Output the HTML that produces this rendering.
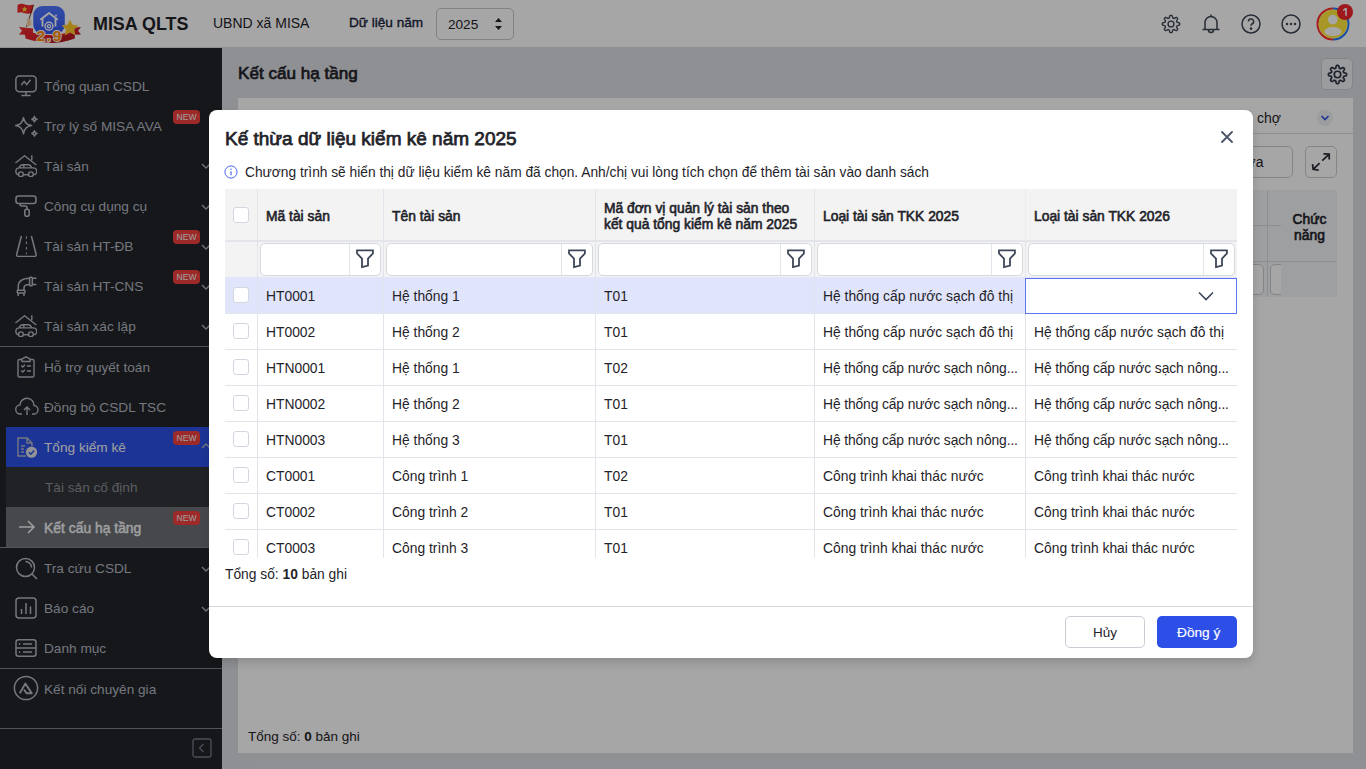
<!DOCTYPE html>
<html><head><meta charset="utf-8">
<style>
*{box-sizing:border-box;margin:0;padding:0}
html,body{width:1366px;height:769px;overflow:hidden;font-family:"Liberation Sans",sans-serif;color:#1f2329;background:#dcdee3}
.abs{position:absolute}
#hdr{position:absolute;left:0;top:0;width:1366px;height:47px;background:#fff}
#side{position:absolute;left:0;top:48px;width:222px;height:721px;background:#222428}
#main{position:absolute;left:222px;top:47px;width:1144px;height:722px;background:#dcdee3}
.si{position:absolute;left:0;width:222px;height:40px}
.si .t{position:absolute;left:44px;top:13px;font-size:13.65px;color:#b3b8c3;white-space:nowrap;line-height:16px}
.si svg{position:absolute;left:15px;top:9px}
.new{position:absolute;left:173px;top:4px;width:27px;height:14px;border-radius:4px;background:#f2403f;color:#f4f4f4;font-size:8.6px;line-height:14px;text-align:center}
.si .chev{position:absolute;left:201px;top:16px}
.sep{position:absolute;left:0;width:222px;height:1px;background:#7c818d}
#ovl{position:absolute;left:0;top:0;width:1366px;height:769px;background:rgba(0,0,0,0.35)}
#modal{position:absolute;left:209px;top:110px;width:1044px;height:548px;background:#fff;border-radius:8px;box-shadow:0 5px 10px rgba(0,0,0,0.14)}

.mt{position:absolute;white-space:nowrap;line-height:16px}
.hl{position:absolute;background:#e1e4ea}
.cb{position:absolute;width:16px;height:16px;border:1px solid #d2d7df;border-radius:3px;background:#fff}
.ht{position:absolute;font-size:13.85px;color:#1f2329;-webkit-text-stroke:0.6px #1f2329;line-height:16px;white-space:nowrap}
.dt{position:absolute;font-size:13.85px;color:#1f2329;line-height:16px;white-space:nowrap;overflow:hidden}
.fi{position:absolute;top:133px;height:33px;border:1px solid #d5d8de;border-radius:5px;background:#fff}
.fi .sp{position:absolute;right:30px;top:0;width:1px;height:31px;background:#e1e4ea}
.fi svg{position:absolute;right:6px;top:5px}
</style></head><body>
<div id="hdr">
  <!-- logo -->
  <svg class="abs" style="left:0;top:0" width="100" height="47" viewBox="0 0 100 47">
    <defs><linearGradient id="bg1" x1="0" y1="0" x2="0" y2="1"><stop offset="0" stop-color="#4f76ff"/><stop offset="1" stop-color="#3658f0"/></linearGradient></defs>
    <path d="M17.5 5 Q21 3 25 4.5 Q29 6 33.5 4.5 L32 13 Q28 14.5 24 13 Q20.5 11.5 17.5 13 Z" fill="#f02a2a"/>
    <path d="M24.5 6.3 l.9 1.9 2 .2 -1.5 1.3 .5 2 -1.9-1 -1.8 1 .5-2 -1.5-1.3 2-.2z" fill="#ffd83a"/>
    <line x1="33.5" y1="5" x2="26.5" y2="27" stroke="#5a2a1a" stroke-width="0.9"/>
    <rect x="33.3" y="6" width="31.5" height="28" rx="9" fill="url(#bg1)"/>
    <path d="M40.3 19.8 L49 13 L57.8 19.8" fill="none" stroke="#fff" stroke-width="1.8" stroke-linejoin="round"/>
    <path d="M56 16.5 V14.5" stroke="#fff" stroke-width="1.5"/>
    <path d="M42.5 18.5 V26.5 M55.5 18.5 V26.5" stroke="#fff" stroke-width="1.8"/>
    <circle cx="49" cy="26.2" r="4.6" fill="#fff"/>
    <circle cx="49" cy="26.2" r="3.2" fill="#3658f0"/>
    <circle cx="49" cy="26.2" r="2.2" fill="#fff"/>
    <circle cx="49" cy="26.2" r="0.9" fill="#3658f0"/>
    <path d="M27 19 Q29.5 18 31 20 L31.5 25 Q29 27 26.5 25.5 Z" fill="#f5cfa8"/>
    <path d="M19 27 L33 28.5 L33 35 L19 34.5 L22 30.8 Z" fill="#e8282c"/>
    <path d="M81 27 L66 28.5 L66 35 L81 34.5 L78 30.8 Z" fill="#c81c22"/>
    <path d="M24.5 30 Q49 40 75.5 30 L74.5 38.5 Q49 46.5 25.5 38.5 Z" fill="#e0222a"/>
    <path d="M50 37 Q62 37 74.5 33 L74.5 38.5 Q62 43 50 43 Z" fill="#b41a20"/>
    <path d="M70 19.8 l2.5 5 5.6.8 -4 3.8 1 5.5 -5.1-2.7 -5 2.7 1-5.5 -4-3.8 5.5-.8z" fill="#ffc928" stroke="#ffe07a" stroke-width="0.4"/>
    <text x="36.5" y="40.8" font-family="Liberation Sans" font-weight="700" font-size="15.5" letter-spacing="1.6" fill="#ff8c00" stroke="#fff" stroke-width="1.8" stroke-linejoin="round" paint-order="stroke">2.9</text>
  </svg>
  <div class="abs" style="left:93px;top:14px;font-size:17.9px;font-weight:700;color:#1f2329;white-space:nowrap;line-height:20px">MISA QLTS</div>
  <div class="abs" style="left:213px;top:15px;font-size:14px;color:#1f2329;white-space:nowrap;line-height:16px">UBND xã MISA</div>
  <div class="abs" style="left:349px;top:15px;font-size:13.6px;color:#1a2340;-webkit-text-stroke:0.35px #1a2340;white-space:nowrap;line-height:16px;">Dữ liệu năm</div>
  <div class="abs" style="left:436px;top:8px;width:78px;height:32px;border:1px solid #c4c7cc;border-radius:5px"></div>
  <div class="abs" style="left:448px;top:17px;font-size:13.6px;color:#1f2329;line-height:16px">2025</div>
  <svg class="abs" style="left:494px;top:17px" width="9" height="14" viewBox="0 0 9 14"><path d="M4.5 1 L8 5 H1Z M4.5 13 L8 9 H1Z" fill="#1f2329"/></svg>
  <!-- right icons -->
  <svg class="abs" style="left:1160px;top:13px" width="22" height="22" viewBox="0 0 24 24" fill="none" stroke="#3d4452" stroke-width="1.5" stroke-linejoin="round"><path d="M12.00 2.55 L12.37 2.56 L12.74 2.58 L13.09 2.77 L13.37 3.38 L13.58 4.06 L13.74 4.73 L13.88 5.35 L14.09 5.58 L14.34 5.67 L14.58 5.76 L14.83 5.87 L15.06 5.99 L15.38 5.97 L15.91 5.63 L16.50 5.27 L17.13 4.94 L17.75 4.70 L18.14 4.81 L18.41 5.06 L18.68 5.32 L18.94 5.59 L19.19 5.86 L19.30 6.25 L19.06 6.87 L18.73 7.50 L18.37 8.09 L18.03 8.62 L18.01 8.94 L18.13 9.17 L18.24 9.42 L18.33 9.66 L18.42 9.91 L18.65 10.12 L19.27 10.26 L19.94 10.42 L20.62 10.63 L21.23 10.91 L21.42 11.26 L21.44 11.63 L21.45 12.00 L21.44 12.37 L21.42 12.74 L21.23 13.09 L20.62 13.37 L19.94 13.58 L19.27 13.74 L18.65 13.88 L18.42 14.09 L18.33 14.34 L18.24 14.58 L18.13 14.83 L18.01 15.06 L18.03 15.38 L18.37 15.91 L18.73 16.50 L19.06 17.13 L19.30 17.75 L19.19 18.14 L18.94 18.41 L18.68 18.68 L18.41 18.94 L18.14 19.19 L17.75 19.30 L17.13 19.06 L16.50 18.73 L15.91 18.37 L15.38 18.03 L15.06 18.01 L14.83 18.13 L14.58 18.24 L14.34 18.33 L14.09 18.42 L13.88 18.65 L13.74 19.27 L13.58 19.94 L13.37 20.62 L13.09 21.23 L12.74 21.42 L12.37 21.44 L12.00 21.45 L11.63 21.44 L11.26 21.42 L10.91 21.23 L10.63 20.62 L10.42 19.94 L10.26 19.27 L10.12 18.65 L9.91 18.42 L9.66 18.33 L9.42 18.24 L9.17 18.13 L8.94 18.01 L8.62 18.03 L8.09 18.37 L7.50 18.73 L6.87 19.06 L6.25 19.30 L5.86 19.19 L5.59 18.94 L5.32 18.68 L5.06 18.41 L4.81 18.14 L4.70 17.75 L4.94 17.13 L5.27 16.50 L5.63 15.91 L5.97 15.38 L5.99 15.06 L5.87 14.83 L5.76 14.58 L5.67 14.34 L5.58 14.09 L5.35 13.88 L4.73 13.74 L4.06 13.58 L3.38 13.37 L2.77 13.09 L2.58 12.74 L2.56 12.37 L2.55 12.00 L2.56 11.63 L2.58 11.26 L2.77 10.91 L3.38 10.63 L4.06 10.42 L4.73 10.26 L5.35 10.12 L5.58 9.91 L5.67 9.66 L5.76 9.42 L5.87 9.17 L5.99 8.94 L5.97 8.62 L5.63 8.09 L5.27 7.50 L4.94 6.87 L4.70 6.25 L4.81 5.86 L5.06 5.59 L5.32 5.32 L5.59 5.06 L5.86 4.81 L6.25 4.70 L6.87 4.94 L7.50 5.27 L8.09 5.63 L8.62 5.97 L8.94 5.99 L9.17 5.87 L9.42 5.76 L9.66 5.67 L9.91 5.58 L10.12 5.35 L10.26 4.73 L10.42 4.06 L10.63 3.38 L10.91 2.77 L11.26 2.58 L11.63 2.56Z"/><circle cx="12" cy="12" r="3.2"/></svg>
  <svg class="abs" style="left:1201px;top:13px" width="20" height="22" viewBox="0 0 20 22" fill="none" stroke="#3d4452" stroke-width="1.5"><path d="M10 1.5 V3 M4 16 V9.5 a6 6 0 0 1 12 0 V16 M1.5 16.5 H18.5 M7.5 17 a2.5 2.5 0 0 0 5 0"/></svg>
  <svg class="abs" style="left:1241px;top:14px" width="20" height="20" viewBox="0 0 20 20" fill="none" stroke="#3d4452" stroke-width="1.5"><circle cx="10" cy="10" r="9"/><path d="M7.4 7.6 a2.6 2.6 0 1 1 3.6 2.4 c-.8.4-1 .9-1 1.8"/><circle cx="10" cy="14.6" r=".6" fill="#3d4452"/></svg>
  <svg class="abs" style="left:1281px;top:14px" width="20" height="20" viewBox="0 0 20 20" fill="none" stroke="#3d4452" stroke-width="1.5"><circle cx="10" cy="10" r="9"/><circle cx="6" cy="10" r=".5" fill="#3d4452"/><circle cx="10" cy="10" r=".5" fill="#3d4452"/><circle cx="14" cy="10" r=".5" fill="#3d4452"/></svg>
  <svg class="abs" style="left:1316px;top:7px" width="34" height="34" viewBox="0 0 34 34">
    <path d="M17 1.5 A15.5 15.5 0 0 0 17 32.5" fill="none" stroke="#ff2d2d" stroke-width="2"/>
    <path d="M17 1.5 A15.5 15.5 0 0 1 17 32.5" fill="none" stroke="#1e7bff" stroke-width="2"/>
    <circle cx="17" cy="17" r="14.3" fill="#ffe83c"/>
    <circle cx="16.8" cy="12.6" r="4.8" fill="#fff"/>
    <ellipse cx="17" cy="24.6" rx="8.6" ry="4.5" fill="#fff"/>
  </svg>
  <div class="abs" style="left:1337px;top:4px;width:16px;height:16px;border-radius:50%;background:#f2272e"><svg class="abs" style="left:5px;top:4px" width="6" height="8" viewBox="0 0 6 8" fill="#fff"><path d="M3.2 0 H4.8 V7.8 H3.2 V2.1 L1.1 3.1 V1.5 Z"/></svg></div>
</div>

<div id="side">
  <div class="si" style="top:18px"><svg width="22" height="22" viewBox="0 0 22 22" fill="none" stroke="#b3b8c3" stroke-width="1.5"><rect x="0.9" y="0.9" width="20.2" height="15.8" rx="3.5"/><path d="M11 16.7 V20.3 M6.3 20.5 H15.7 M6.2 10 L9.2 6.6 L11.8 9.6 L15.5 4.8"/></svg><div class="t">Tổng quan CSDL</div></div>
  <div class="si" style="top:58px"><svg width="24" height="24" viewBox="0 0 24 24" fill="none" stroke="#b3b8c3" stroke-width="1.5" stroke-linejoin="round"><path d="M8.5 2.6 Q9.6 9.6 16.6 10.6 Q9.6 11.6 8.5 18.8 Q7.4 11.6 0.6 10.6 Q7.4 9.6 8.5 2.6Z"/><path d="M19.4 1.5 Q19.8 3.8 22 4.2 Q19.8 4.6 19.4 6.9 Q19 4.6 16.8 4.2 Q19 3.8 19.4 1.5Z M19.4 15.7 Q19.8 18 22 18.4 Q19.8 18.8 19.4 21.1 Q19 18.8 16.8 18.4 Q19 18 19.4 15.7Z"/></svg><div class="t">Trợ lý số MISA AVA</div><div class="new">NEW</div></div>
  <div class="si" style="top:98px"><svg width="22" height="22" viewBox="0 0 22 22" fill="none" stroke="#b3b8c3" stroke-width="1.4"><path d="M0.4 8 L9.6 0.8 L21.4 10" stroke-linejoin="round"/><path d="M16.8 0.2 V5.2"/><path d="M4 12.8 Q5.2 9.7 7.8 9.7 H13.6 Q15.4 9.7 16.6 12.8 M8.8 9.9 V12.8"/><rect x="0.9" y="12.9" width="20.8" height="6.9" rx="3.4"/><circle cx="5.9" cy="19.3" r="2.4" fill="#222428"/><circle cx="15.9" cy="19.3" r="2.4" fill="#222428"/></svg><div class="t">Tài sản</div><svg class="chev" style="left:201px;top:15px" width="10" height="10" viewBox="0 0 10 10" fill="none" stroke="#b3b8c3" stroke-width="1.3"><path d="M1 3 L5 7 L9 3"/></svg></div>
  <div class="si" style="top:138px"><svg width="24" height="24" viewBox="0 0 24 24" fill="none" stroke="#b3b8c3" stroke-width="1.6"><rect x="1" y="1" width="20" height="7.5" rx="2.5"/><path d="M5 8.5 V9 Q5 11 7 11 H10 Q12 11 12 13 V14"/><rect x="9.8" y="14.2" width="4.4" height="7" rx="2"/></svg><div class="t">Công cụ dụng cụ</div><svg class="chev" width="10" height="10" viewBox="0 0 10 10" fill="none" stroke="#b3b8c3" stroke-width="1.3"><path d="M1 3 L5 7 L9 3"/></svg></div>
  <div class="si" style="top:178px"><svg width="22" height="22" viewBox="0 0 22 22" fill="none" stroke="#b3b8c3" stroke-width="1.5"><path d="M6.4 1 L1.7 19.3 Q1.3 21.4 3.4 21.4 H19.4 Q21.5 21.4 21.1 19.3 L16.4 1" stroke-linejoin="round"/><path d="M11.4 1.2 V3.8 M11.4 6.6 V9.2 M11.4 12 V14.6 M11.4 17.4 V19.2" stroke-width="1.1"/></svg><div class="t">Tài sản HT-ĐB</div><div class="new">NEW</div><svg class="chev" width="10" height="10" viewBox="0 0 10 10" fill="none" stroke="#b3b8c3" stroke-width="1.3"><path d="M1 3 L5 7 L9 3"/></svg></div>
  <div class="si" style="top:218px"><svg width="22" height="22" viewBox="0 0 22 22" fill="none" stroke="#b3b8c3" stroke-width="1.5"><path d="M3.2 15.2 V12 Q3.2 3.4 14.6 3.3 M9 15.2 V12.8 Q9 9.6 14.6 9.6 M17.3 3.3 H21.4 M17.3 9.6 H21.4 M3.2 17.9 V21 M9 17.9 V21"/><rect x="14.6" y="2.2" width="2.7" height="8.6" rx="0.8"/><rect x="2.2" y="15.2" width="7.8" height="2.7" rx="0.8"/></svg><div class="t">Tài sản HT-CNS</div><div class="new">NEW</div><svg class="chev" width="10" height="10" viewBox="0 0 10 10" fill="none" stroke="#b3b8c3" stroke-width="1.3"><path d="M1 3 L5 7 L9 3"/></svg></div>
  <div class="si" style="top:258px"><svg width="22" height="22" viewBox="0 0 22 22" fill="none" stroke="#b3b8c3" stroke-width="1.4"><path d="M0.4 8 L9.6 0.8 L21.4 10" stroke-linejoin="round"/><path d="M16.8 0.2 V5.2"/><path d="M4 12.8 Q5.2 9.7 7.8 9.7 H13.6 Q15.4 9.7 16.6 12.8 M8.8 9.9 V12.8"/><rect x="0.9" y="12.9" width="20.8" height="6.9" rx="3.4"/><circle cx="5.9" cy="19.3" r="2.4" fill="#222428"/><circle cx="15.9" cy="19.3" r="2.4" fill="#222428"/></svg><div class="t">Tài sản xác lập</div><svg class="chev" width="10" height="10" viewBox="0 0 10 10" fill="none" stroke="#b3b8c3" stroke-width="1.3"><path d="M1 3 L5 7 L9 3"/></svg></div>
  <div class="sep" style="top:298px"></div>
  <div class="si" style="top:299px"><svg width="22" height="22" viewBox="0 0 22 22" fill="none" stroke="#b3b8c3" stroke-width="1.4"><path d="M7 3.5 H4.5 Q3 3.5 3 5 V19.5 Q3 21 4.5 21 H17.5 Q19 21 19 19.5 V5 Q19 3.5 17.5 3.5 H15 M7 5.5 V3 L11 0.8 L15 3 V5.5 Z"/><path d="M6.3 9.5 L7.8 11 L10 8.8 M12 10 H16 M6.3 14.5 L7.8 16 L10 13.8 M12 15 H16"/></svg><div class="t">Hỗ trợ quyết toán</div></div>
  <div class="si" style="top:339px"><svg width="24" height="22" viewBox="0 0 24 22" fill="none" stroke="#b3b8c3" stroke-width="1.4"><path d="M7 18 H5.5 A4.5 4.5 0 0 1 5 9 A7 7 0 0 1 19 9.5 A4.2 4.2 0 0 1 18.5 18 H17 M12 19 V11 M9 14 L12 11 L15 14"/></svg><div class="t">Đồng bộ CSDL TSC</div></div>
  <div class="si" style="top:379px;left:6px;width:216px;background:#2b50e6"><svg style="left:9px" width="22" height="22" viewBox="0 0 22 22" fill="none" stroke="#b3b8c3" stroke-width="1.4"><path d="M11 20 H3 V2 H12 L17 7 V10 M12 2 V7 H17 M6 10 H10 M6 13 H9 M6 16 H9"/><circle cx="16.5" cy="16.2" r="5.6" fill="#dfe1e6" stroke="none"/><path d="M13.8 16.3 L15.8 18.2 L19.2 14.6" stroke="#2b50e6" stroke-width="1.4"/></svg><div class="t" style="left:38px;color:#f4f5f7">Tổng kiểm kê</div><div class="new" style="left:167px">NEW</div><svg class="chev" style="left:195px;top:14px" width="10" height="10" viewBox="0 0 10 10" fill="none" stroke="#b3b8c3" stroke-width="1.3"><path d="M1 7 L5 3 L9 7"/></svg></div>
  <div class="si" style="top:419px;left:6px;width:216px;background:#33353a"><div class="t" style="left:39px;color:#8d9097">Tài sản cố định</div></div>
  <div class="si" style="top:459px;left:6px;width:216px;background:#6d6f75"><svg style="left:12px;top:12px" width="18" height="16" viewBox="0 0 18 16" fill="none" stroke="#f4f5f7" stroke-width="1.5"><path d="M1 8 H16 M10 2 L16 8 L10 14"/></svg><div class="t" style="left:38px;font-size:13.9px;color:#f4f5f7;-webkit-text-stroke:0.45px #f4f5f7">Kết cấu hạ tầng</div><div class="new" style="left:167px">NEW</div></div>
  <div class="sep" style="top:499px"></div>
  <div class="si" style="top:500px"><svg width="24" height="24" viewBox="0 0 24 24" fill="none" stroke="#b3b8c3" stroke-width="1.5"><circle cx="10.5" cy="10.5" r="9"/><path d="M17 17 L22 22 M10.5 4.5 A6 6 0 0 1 16.5 10.5"/></svg><div class="t">Tra cứu CSDL</div><svg class="chev" width="10" height="10" viewBox="0 0 10 10" fill="none" stroke="#b3b8c3" stroke-width="1.3"><path d="M1 3 L5 7 L9 3"/></svg></div>
  <div class="si" style="top:540px"><svg width="22" height="22" viewBox="0 0 22 22" fill="none" stroke="#b3b8c3" stroke-width="1.5"><rect x="1" y="1" width="20" height="20" rx="3"/><path d="M6.5 17 V12 M11 17 V6 M15.5 17 V9.5"/></svg><div class="t">Báo cáo</div><svg class="chev" width="10" height="10" viewBox="0 0 10 10" fill="none" stroke="#b3b8c3" stroke-width="1.3"><path d="M1 3 L5 7 L9 3"/></svg></div>
  <div class="si" style="top:580px"><svg width="22" height="22" viewBox="0 0 22 22" fill="none" stroke="#b3b8c3" stroke-width="1.5"><rect x="1" y="2.7" width="20" height="16.6" rx="2.5"/><path d="M1 11 H21 M8 6.9 H17 M8 15.1 H17"/><circle cx="4.6" cy="6.9" r=".9" fill="#b3b8c3" stroke="none"/><circle cx="4.6" cy="15.1" r=".9" fill="#b3b8c3" stroke="none"/></svg><div class="t">Danh mục</div></div>
  <div class="sep" style="top:620px"></div>
  <div class="si" style="top:621px"><svg style="left:13px;top:6px" width="26" height="26" viewBox="0 0 26 26" fill="none" stroke="#b3b8c3" stroke-width="1.5"><circle cx="13" cy="13" r="11.6"/><path d="M6.8 18.2 L12.3 8.6 L18.8 18.2 H13.6 L11 14.6" stroke-width="1.9" stroke-linejoin="round"/></svg><div class="t">Kết nối chuyên gia</div></div>
  <div class="sep" style="top:680px"></div>
  <svg class="abs" style="left:192px;top:690px" width="20" height="20" viewBox="0 0 20 20" fill="none" stroke="#737a8a" stroke-width="1.3"><rect x="1" y="1" width="18" height="18" rx="2"/><path d="M11.5 6 L7.5 10 L11.5 14"/></svg>
</div>
<div id="main">
  <div class="abs" style="left:16px;top:18px;font-size:17.1px;color:#1f2329;-webkit-text-stroke:0.7px #1f2329;white-space:nowrap;line-height:18px">Kết cấu hạ tầng</div>
  <div class="abs" style="left:1099px;top:11px;width:32px;height:32px;border:1px solid #c9cdd4;border-radius:5px;background:#eef0f3"></div>
  <svg class="abs" style="left:1103.5px;top:15.5px" width="23" height="23" viewBox="0 0 24 24" fill="none" stroke="#2d3545" stroke-width="1.8" stroke-linejoin="round"><path d="M12.00 2.55 L12.37 2.56 L12.74 2.58 L13.09 2.77 L13.37 3.38 L13.58 4.06 L13.74 4.73 L13.88 5.35 L14.09 5.58 L14.34 5.67 L14.58 5.76 L14.83 5.87 L15.06 5.99 L15.38 5.97 L15.91 5.63 L16.50 5.27 L17.13 4.94 L17.75 4.70 L18.14 4.81 L18.41 5.06 L18.68 5.32 L18.94 5.59 L19.19 5.86 L19.30 6.25 L19.06 6.87 L18.73 7.50 L18.37 8.09 L18.03 8.62 L18.01 8.94 L18.13 9.17 L18.24 9.42 L18.33 9.66 L18.42 9.91 L18.65 10.12 L19.27 10.26 L19.94 10.42 L20.62 10.63 L21.23 10.91 L21.42 11.26 L21.44 11.63 L21.45 12.00 L21.44 12.37 L21.42 12.74 L21.23 13.09 L20.62 13.37 L19.94 13.58 L19.27 13.74 L18.65 13.88 L18.42 14.09 L18.33 14.34 L18.24 14.58 L18.13 14.83 L18.01 15.06 L18.03 15.38 L18.37 15.91 L18.73 16.50 L19.06 17.13 L19.30 17.75 L19.19 18.14 L18.94 18.41 L18.68 18.68 L18.41 18.94 L18.14 19.19 L17.75 19.30 L17.13 19.06 L16.50 18.73 L15.91 18.37 L15.38 18.03 L15.06 18.01 L14.83 18.13 L14.58 18.24 L14.34 18.33 L14.09 18.42 L13.88 18.65 L13.74 19.27 L13.58 19.94 L13.37 20.62 L13.09 21.23 L12.74 21.42 L12.37 21.44 L12.00 21.45 L11.63 21.44 L11.26 21.42 L10.91 21.23 L10.63 20.62 L10.42 19.94 L10.26 19.27 L10.12 18.65 L9.91 18.42 L9.66 18.33 L9.42 18.24 L9.17 18.13 L8.94 18.01 L8.62 18.03 L8.09 18.37 L7.50 18.73 L6.87 19.06 L6.25 19.30 L5.86 19.19 L5.59 18.94 L5.32 18.68 L5.06 18.41 L4.81 18.14 L4.70 17.75 L4.94 17.13 L5.27 16.50 L5.63 15.91 L5.97 15.38 L5.99 15.06 L5.87 14.83 L5.76 14.58 L5.67 14.34 L5.58 14.09 L5.35 13.88 L4.73 13.74 L4.06 13.58 L3.38 13.37 L2.77 13.09 L2.58 12.74 L2.56 12.37 L2.55 12.00 L2.56 11.63 L2.58 11.26 L2.77 10.91 L3.38 10.63 L4.06 10.42 L4.73 10.26 L5.35 10.12 L5.58 9.91 L5.67 9.66 L5.76 9.42 L5.87 9.17 L5.99 8.94 L5.97 8.62 L5.63 8.09 L5.27 7.50 L4.94 6.87 L4.70 6.25 L4.81 5.86 L5.06 5.59 L5.32 5.32 L5.59 5.06 L5.86 4.81 L6.25 4.70 L6.87 4.94 L7.50 5.27 L8.09 5.63 L8.62 5.97 L8.94 5.99 L9.17 5.87 L9.42 5.76 L9.66 5.67 L9.91 5.58 L10.12 5.35 L10.26 4.73 L10.42 4.06 L10.63 3.38 L10.91 2.77 L11.26 2.58 L11.63 2.56Z"/><circle cx="12" cy="12" r="3.4"/></svg>
  <div class="abs" style="left:16px;top:51px;width:1115px;height:655px;background:#fff">
    <div class="abs" style="left:1019px;top:12px;font-size:14px;color:#1f2329;line-height:16px;white-space:nowrap">chợ</div>
    <div class="abs" style="left:1079px;top:12px;width:16px;height:16px;border-radius:50%;background:#f0f1f3"></div>
    <svg class="abs" style="left:1082px;top:16px" width="10" height="8" viewBox="0 0 10 8" fill="none" stroke="#3150e6" stroke-width="1.6"><path d="M1.5 2 L5 5.5 L8.5 2"/></svg>
    <div class="abs" style="left:0;top:35px;width:1115px;height:1px;background:#d7dae0"></div>
    <div class="abs" style="left:940px;top:48px;width:115px;height:32px;border:1px solid #c9cdd4;border-radius:5px"></div>
    <div class="abs" style="left:999px;top:56px;font-size:14px;color:#1f2329;line-height:16px">Sửa</div>
    <div class="abs" style="left:1067px;top:48px;width:32px;height:32px;border:1px solid #c9cdd4;border-radius:5px"></div>
    <svg class="abs" style="left:1073px;top:54px" width="20" height="20" viewBox="0 0 20 20" fill="none" stroke="#2b2f36" stroke-width="1.75"><path d="M12.4 1.9 L18.2 2.1 L18.2 7.5 M18.2 2.1 L11.2 8.6 M1.6 12.1 L2.1 17.3 L7.7 18.2 M2.1 17.3 L8.6 11.2"/></svg>
    <div class="abs" style="left:0;top:92px;width:1099px;height:107px;background:#f3f4f6"></div>
    <div class="abs" style="left:0;top:163px;width:1099px;height:1px;background:#d7dae0"></div>
    <div class="abs" style="left:0;top:127px;width:1043px;height:1px;background:#d7dae0"></div>
    <div class="abs" style="left:1029px;top:92px;width:1px;height:107px;background:#d7dae0"></div>
    <div class="abs" style="left:1044px;top:113px;width:55px;text-align:center;font-size:13.85px;color:#1f2329;-webkit-text-stroke:0.6px #1f2329;line-height:16px">Chức năng</div>
    <div class="abs" style="left:980px;top:166px;width:46px;height:31px;border:1px solid #c9cdd4;border-radius:5px;background:#fff"></div>
    <div class="abs" style="left:1032px;top:166px;width:60px;height:31px;border:1px solid #c9cdd4;border-radius:5px;background:#fff"></div>
    <div class="abs" style="left:1043px;top:164px;width:56px;height:35px;background:#f3f4f6"></div>
    <div class="abs" style="left:10px;top:631px;font-size:13.5px;color:#1f2329;line-height:16px;white-space:nowrap">Tổng số: <b>0</b> bản ghi</div>
  </div>
</div>
<div id="ovl"></div>
<div id="modal">
<div class="mt" style="left:16px;top:19px;font-size:19px;color:#1f2329;-webkit-text-stroke:0.75px #1f2329;line-height:20px">Kế thừa dữ liệu kiểm kê năm 2025</div>
<svg class="abs" style="left:1012px;top:21px" width="12" height="12" viewBox="0 0 12 12" fill="none" stroke="#4b5569" stroke-width="1.8" stroke-linecap="round"><path d="M1 1 L11 11 M11 1 L1 11"/></svg>
<svg class="abs" style="left:15px;top:55px" width="14" height="14" viewBox="0 0 14 14" fill="none" stroke="#4a67f2" stroke-width="1"><circle cx="7" cy="7" r="6.1"/><path d="M7 6.2 V10.3" stroke-width="1.2"/><circle cx="7" cy="4.3" r=".75" fill="#4a67f2" stroke="none"/></svg>
<div class="mt" style="left:36px;top:55px;font-size:13.75px;color:#1f2329">Chương trình sẽ hiển thị dữ liệu kiểm kê năm đã chọn. Anh/chị vui lòng tích chọn để thêm tài sản vào danh sách</div>
<div class="abs" style="left:16px;top:79px;width:1012px;height:89px;background:#f3f3f4"></div>
<div class="hl" style="left:16px;top:130px;width:1012px;height:2px;background:#e3e5ea"></div>
<div class="abs" style="left:16px;top:167px;width:1012px;height:36px;background:#e1e5fc"></div>
<div class="hl" style="left:16px;top:203px;width:1012px;height:1px"></div>
<div class="hl" style="left:16px;top:239px;width:1012px;height:1px"></div>
<div class="hl" style="left:16px;top:275px;width:1012px;height:1px"></div>
<div class="hl" style="left:16px;top:311px;width:1012px;height:1px"></div>
<div class="hl" style="left:16px;top:347px;width:1012px;height:1px"></div>
<div class="hl" style="left:16px;top:383px;width:1012px;height:1px"></div>
<div class="hl" style="left:16px;top:419px;width:1012px;height:1px"></div>
<div class="hl" style="left:48px;top:79px;width:1px;height:369px"></div>
<div class="hl" style="left:174px;top:79px;width:1px;height:369px"></div>
<div class="hl" style="left:386px;top:79px;width:1px;height:369px"></div>
<div class="hl" style="left:605px;top:79px;width:1px;height:369px"></div>
<div class="hl" style="left:816px;top:79px;width:1px;height:52px;background:#ececee"></div>
<div class="hl" style="left:816px;top:131px;width:1px;height:317px"></div>
<div class="cb" style="left:24px;top:97px"></div>
<div class="ht" style="left:57px;top:98px">Mã tài sản</div>
<div class="ht" style="left:183px;top:98px">Tên tài sản</div>
<div class="ht" style="left:395px;top:90px">Mã đơn vị quản lý tài sản theo<br>kết quả tổng kiểm kê năm 2025</div>
<div class="ht" style="left:614px;top:98px">Loại tài sản TKK 2025</div>
<div class="ht" style="left:825px;top:98px">Loại tài sản TKK 2026</div>
<div class="fi" style="left:51px;width:121px"><div class="sp"></div><svg width="18" height="20" viewBox="0 0 18 20" fill="none" stroke="#3e4759" stroke-width="1.8" stroke-linejoin="miter"><path d="M1 1.3 H16.9 V4.5 L12 9.5 V16.5 L6 18 V9.5 L1 4.5 Z"/></svg></div>
<div class="fi" style="left:177px;width:207px"><div class="sp"></div><svg width="18" height="20" viewBox="0 0 18 20" fill="none" stroke="#3e4759" stroke-width="1.8" stroke-linejoin="miter"><path d="M1 1.3 H16.9 V4.5 L12 9.5 V16.5 L6 18 V9.5 L1 4.5 Z"/></svg></div>
<div class="fi" style="left:389px;width:214px"><div class="sp"></div><svg width="18" height="20" viewBox="0 0 18 20" fill="none" stroke="#3e4759" stroke-width="1.8" stroke-linejoin="miter"><path d="M1 1.3 H16.9 V4.5 L12 9.5 V16.5 L6 18 V9.5 L1 4.5 Z"/></svg></div>
<div class="fi" style="left:608px;width:206px"><div class="sp"></div><svg width="18" height="20" viewBox="0 0 18 20" fill="none" stroke="#3e4759" stroke-width="1.8" stroke-linejoin="miter"><path d="M1 1.3 H16.9 V4.5 L12 9.5 V16.5 L6 18 V9.5 L1 4.5 Z"/></svg></div>
<div class="fi" style="left:819px;width:207px"><div class="sp"></div><svg width="18" height="20" viewBox="0 0 18 20" fill="none" stroke="#3e4759" stroke-width="1.8" stroke-linejoin="miter"><path d="M1 1.3 H16.9 V4.5 L12 9.5 V16.5 L6 18 V9.5 L1 4.5 Z"/></svg></div>
<div class="abs" style="left:0;top:0;width:1044px;height:448px;overflow:hidden"><div class="cb" style="left:24px;top:177px"></div><div class="dt" style="left:57px;top:178px">HT0001</div><div class="dt" style="left:183px;top:178px">Hệ thống 1</div><div class="dt" style="left:395px;top:178px">T01</div><div class="dt" style="left:614px;top:178px">Hệ thống cấp nước sạch đô thị</div><div class="cb" style="left:24px;top:213px"></div><div class="dt" style="left:57px;top:214px">HT0002</div><div class="dt" style="left:183px;top:214px">Hệ thống 2</div><div class="dt" style="left:395px;top:214px">T01</div><div class="dt" style="left:614px;top:214px">Hệ thống cấp nước sạch đô thị</div><div class="dt" style="left:825px;top:214px">Hệ thống cấp nước sạch đô thị</div><div class="cb" style="left:24px;top:249px"></div><div class="dt" style="left:57px;top:250px">HTN0001</div><div class="dt" style="left:183px;top:250px">Hệ thống 1</div><div class="dt" style="left:395px;top:250px">T02</div><div class="dt" style="left:614px;top:250px;letter-spacing:-0.12px">Hệ thống cấp nước sạch nông...</div><div class="dt" style="left:825px;top:250px;letter-spacing:-0.12px">Hệ thống cấp nước sạch nông...</div><div class="cb" style="left:24px;top:285px"></div><div class="dt" style="left:57px;top:286px">HTN0002</div><div class="dt" style="left:183px;top:286px">Hệ thống 2</div><div class="dt" style="left:395px;top:286px">T01</div><div class="dt" style="left:614px;top:286px;letter-spacing:-0.12px">Hệ thống cấp nước sạch nông...</div><div class="dt" style="left:825px;top:286px;letter-spacing:-0.12px">Hệ thống cấp nước sạch nông...</div><div class="cb" style="left:24px;top:321px"></div><div class="dt" style="left:57px;top:322px">HTN0003</div><div class="dt" style="left:183px;top:322px">Hệ thống 3</div><div class="dt" style="left:395px;top:322px">T01</div><div class="dt" style="left:614px;top:322px;letter-spacing:-0.12px">Hệ thống cấp nước sạch nông...</div><div class="dt" style="left:825px;top:322px;letter-spacing:-0.12px">Hệ thống cấp nước sạch nông...</div><div class="cb" style="left:24px;top:357px"></div><div class="dt" style="left:57px;top:358px">CT0001</div><div class="dt" style="left:183px;top:358px">Công trình 1</div><div class="dt" style="left:395px;top:358px">T02</div><div class="dt" style="left:614px;top:358px">Công trình khai thác nước</div><div class="dt" style="left:825px;top:358px">Công trình khai thác nước</div><div class="cb" style="left:24px;top:393px"></div><div class="dt" style="left:57px;top:394px">CT0002</div><div class="dt" style="left:183px;top:394px">Công trình 2</div><div class="dt" style="left:395px;top:394px">T01</div><div class="dt" style="left:614px;top:394px">Công trình khai thác nước</div><div class="dt" style="left:825px;top:394px">Công trình khai thác nước</div><div class="cb" style="left:24px;top:429px"></div><div class="dt" style="left:57px;top:430px">CT0003</div><div class="dt" style="left:183px;top:430px">Công trình 3</div><div class="dt" style="left:395px;top:430px">T01</div><div class="dt" style="left:614px;top:430px">Công trình khai thác nước</div><div class="dt" style="left:825px;top:430px">Công trình khai thác nước</div></div>
<div class="abs" style="left:816px;top:168px;width:212px;height:36px;border:1.5px solid #5b76f2;background:#fff"></div>
<svg class="abs" style="left:989px;top:181px" width="16" height="10" viewBox="0 0 16 10" fill="none" stroke="#3b4558" stroke-width="1.6"><path d="M1 1.5 L8 8.5 L15 1.5"/></svg>
<div class="mt" style="left:16px;top:457px;font-size:13.8px;color:#1f2329">Tổng số: <b>10</b> bản ghi</div>
<div class="abs" style="left:0;top:496px;width:1044px;height:1px;background:#d5d8de"></div>
<div class="abs" style="left:856px;top:506px;width:80px;height:32px;border:1px solid #c9cdd4;border-radius:5px;background:#fff"></div>
<div class="mt" style="left:884px;top:515px;font-size:13.5px;color:#1f2329">Hủy</div>
<div class="abs" style="left:948px;top:506px;width:80px;height:32px;border-radius:5px;background:#2d4fe8"></div>
<div class="mt" style="left:968px;top:515px;font-size:13.7px;color:#fff;-webkit-text-stroke:0.15px #fff">Đồng ý</div>
</div>
</body></html>
